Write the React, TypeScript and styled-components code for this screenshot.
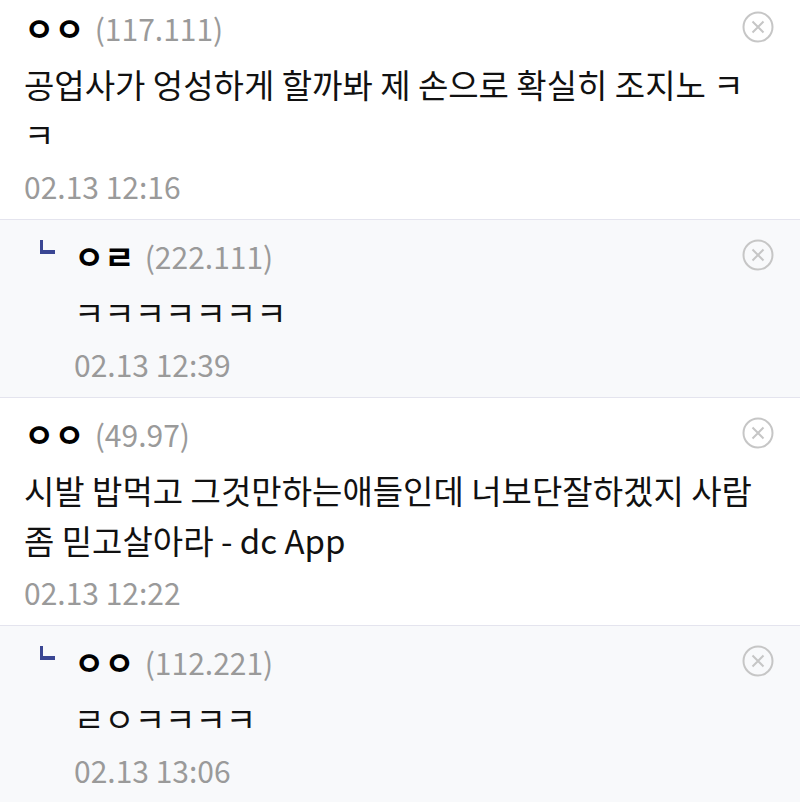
import React from "react";
import styled, { createGlobalStyle } from "styled-components";

const GlobalStyle = createGlobalStyle`
  html, body { margin: 0; padding: 0; background: #fff; }
  body { font-family: "Noto Sans CJK KR", "Noto Sans", sans-serif; overflow: hidden; }
`;

const List = styled.ul`
  list-style: none;
  margin: -8px 0 0 0;
  padding: 0;
  width: 800px;
`;

const Row = styled.li<{ $reply?: boolean }>`
  display: flex;
  align-items: flex-start;
  padding: 12px 24px 9px ${(p) => (p.$reply ? "40px" : "24px")};
  background: ${(p) => (p.$reply ? "#f8f9fb" : "#fff")};
  border-bottom: 1px solid #e4e4ee;
`;

const ReplyMark = styled.span`
  flex: none;
  width: 12px;
  height: 10px;
  margin: 8px 19px 0 0;
  border-left: 3px solid #3a4693;
  border-bottom: 4px solid #3a4693;
`;

const Body = styled.div`
  flex: 1;
  min-width: 0;
`;

const Head = styled.div`
  display: flex;
  align-items: center;
  height: 48px;
  margin-bottom: 7px;
`;

const Nick = styled.span`
  font-size: 33px;
  color: #000;
  font-weight: 700;
`;

const Ip = styled.span`
  font-size: 30px;
  color: #9a9a9a;
  margin-left: 10px;
  font-weight: 400;
`;

const Del = styled.button`
  margin: -2px 2px 0 auto;
  width: 32px;
  height: 32px;
  padding: 0;
  border: 0;
  background: none;
  display: flex;
  align-items: center;
  justify-content: center;
`;

const Text = styled.p`
  margin: 0;
  padding-right: 16px;
  font-size: 33px;
  line-height: 50px;
  color: #111;
`;

const Date = styled.div`
  margin-top: 3px;
  font-size: 30px;
  line-height: 48px;
  color: #9a9a9a;
  font-weight: 400;
`;

const CloseIcon = () => (
  <svg width="32" height="32" viewBox="0 0 32 32" fill="none" stroke="#c6c6c6" strokeWidth="2">
    <circle cx="16" cy="16" r="14.5" />
    <path d="M10.5 10.5 L21.5 21.5 M21.5 10.5 L10.5 21.5" />
  </svg>
);

type C = { nick: string; ip: string; text: string; date: string; reply?: boolean };

const comments: C[] = [
  { nick: "ㅇㅇ", ip: "(117.111)", text: "공업사가 엉성하게 할까봐 제 손으로 확실히 조지노 ㅋㅋ", date: "02.13 12:16" },
  { nick: "ㅇㄹ", ip: "(222.111)", text: "ㅋㅋㅋㅋㅋㅋㅋ", date: "02.13 12:39", reply: true },
  { nick: "ㅇㅇ", ip: "(49.97)", text: "시발 밥먹고 그것만하는애들인데 너보단잘하겠지 사람 좀 믿고살아라 - dc App", date: "02.13 12:22" },
  { nick: "ㅇㅇ", ip: "(112.221)", text: "ㄹㅇㅋㅋㅋㅋ", date: "02.13 13:06", reply: true },
];

export default function App() {
  return (
    <>
      <GlobalStyle />
      <List>
        {comments.map((c, i) => (
          <Row key={i} $reply={c.reply}>
            {c.reply && <ReplyMark />}
            <Body>
              <Head>
                <Nick>{c.nick}</Nick>
                <Ip>{c.ip}</Ip>
                <Del aria-label="삭제">
                  <CloseIcon />
                </Del>
              </Head>
              <Text>{c.text}</Text>
              <Date>{c.date}</Date>
            </Body>
          </Row>
        ))}
      </List>
    </>
  );
}
